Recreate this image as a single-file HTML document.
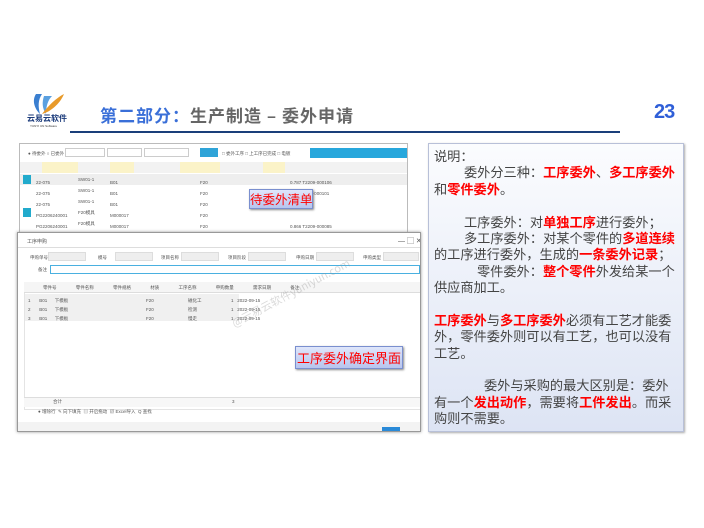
<!DOCTYPE html>
<html><head><meta charset="utf-8"><style>
*{margin:0;padding:0;box-sizing:border-box}
body{width:704px;height:528px;background:#fff;position:relative;overflow:hidden;font-family:"Liberation Sans","Noto Sans CJK SC",sans-serif}
.abs{position:absolute}
.t{font-size:4.5px;color:#555;white-space:nowrap}
.tag{position:absolute;background:linear-gradient(#dfe6fb,#b7c5ee);border:1px solid #7a8fcf;box-shadow:1px 1px 2px #888;color:#f00;font-family:"Noto Sans CJK SC",sans-serif;text-align:center;white-space:nowrap}
.note{position:absolute;left:428px;top:143px;width:256px;height:289px;border:1px solid #b8c0d8;background:linear-gradient(#fbfcfe,#dde4f4);box-shadow:1px 1px 2px #aaa;font-family:"Noto Sans CJK SC",sans-serif;font-size:13.2px;color:#444;padding:4px 0 0 5px;line-height:16.4px}
.note div{white-space:nowrap;height:16.4px}
.r{color:#f00;font-weight:bold}
</style></head><body>
<!-- logo -->
<svg class="abs" style="left:30px;top:92px" width="36" height="24" viewBox="0 0 36 24">
<path d="M6 2 C2 8 4 16 10 22 C8 14 8 8 12 2 Z" fill="#3a7fd0"/>
<path d="M14 4 C12 10 12 16 16 22 C16 14 18 8 22 4 Z" fill="#5aa0e0"/>
<path d="M12 22 C20 20 30 12 34 2 C26 6 18 14 12 22 Z" fill="#e89a2a"/>
</svg>
<div class="abs" style="left:27px;top:113px;font-size:8px;font-weight:bold;color:#1a3a7a;font-family:'Noto Sans CJK SC',sans-serif">云易云软件</div>
<div class="abs" style="left:30px;top:124px;font-size:3px;color:#333">YUNYI UN Software</div>
<div class="abs" style="left:100px;top:102px;font-size:17px;font-family:'Noto Sans CJK SC',sans-serif;font-weight:bold;color:#666;white-space:nowrap;letter-spacing:1px"><span style="color:#3a6fd8">第二部分：</span>生产制造 – 委外申请</div>
<div class="abs" style="left:654px;top:101px;font-size:20px;font-weight:bold;color:#2f5fd8;letter-spacing:-1px">23</div>
<div class="abs" style="left:70px;top:131px;width:550px;height:2px;background:#1a3f7a"></div>

<!-- screenshot 1 -->
<div class="abs" style="left:19px;top:143px;width:389px;height:92px;border:1px solid #bbb;background:#fff;overflow:hidden">
 <div class="abs t" style="left:8px;top:7px">● 待委外 ○ 已委外</div>
 <div class="abs" style="left:45px;top:4px;width:40px;height:9px;border:1px solid #ccc"></div>
 <div class="abs" style="left:87px;top:4px;width:35px;height:9px;border:1px solid #ccc"></div>
 <div class="abs" style="left:124px;top:4px;width:45px;height:9px;border:1px solid #ccc"></div>
 <div class="abs" style="left:180px;top:4px;width:18px;height:9px;background:#2fa4d8"></div>
 <div class="abs t" style="left:202px;top:7px">□ 委外工序 □ 上工序已完成 □ 电镀</div>
 <div class="abs" style="left:290px;top:4px;width:99px;height:10px;background:#27a7dc"></div>
 <div class="abs" style="left:0;top:18px;width:389px;height:11px;background:#f2f2f2"></div>
 <div class="abs" style="left:22px;top:18px;width:36px;height:11px;background:#fbf3c8"></div>
 <div class="abs" style="left:90px;top:18px;width:24px;height:11px;background:#fbf3c8"></div>
 <div class="abs" style="left:160px;top:18px;width:40px;height:11px;background:#fbf3c8"></div>
 <div class="abs" style="left:243px;top:18px;width:22px;height:11px;background:#fbf3c8"></div>
 <div class="abs" style="left:0;top:30px;width:389px;height:11px;background:#eee"></div>
 <div class="abs" style="left:3px;top:31px;width:8px;height:9px;background:#2ac"></div>
 <div class="abs" style="left:3px;top:64px;width:8px;height:9px;background:#2ac"></div>
 <div class="abs t" style="left:16px;top:33px;line-height:11px">22-075<br>22-075<br>22-075<br>PG2206240001<br>PG2206240001<br>PG2206240001</div>
 <div class="abs t" style="left:58px;top:30px;line-height:11px">SW01-1<br>SW01-1<br>SW01-1<br>F20模具<br>F20模具<br>F20模具</div>
 <div class="abs t" style="left:90px;top:33px;line-height:11px">B01<br>B01<br>B01<br>M000017<br>M000017<br>M000017</div>
 <div class="abs t" style="left:180px;top:33px;line-height:11px">F20<br>F20<br>F20<br>F20<br>F20<br>F20</div>
 <div class="abs t" style="left:270px;top:33px;line-height:11px">0.787 T2209-000106<br>4.83 T2209-000101<br><br><br>0.866 T2209-000085<br>0.866 T2209-000084</div>
</div>
<div class="tag" style="left:249px;top:189px;width:64px;height:20px;font-size:12.5px;line-height:18px">待委外清单</div>

<!-- dialog -->
<div class="abs" style="left:17px;top:232px;width:404px;height:200px;border:1px solid #999;background:#fff;box-shadow:0 0 3px #999;overflow:hidden">
 <div class="abs t" style="left:9px;top:5px;font-size:5px">工序申购</div>
 <div class="abs t" style="left:380px;top:3px;font-size:7px">— ▢ ✕</div>
 <div class="abs" style="left:0;top:14px;width:404px;height:1px;background:#ddd"></div>
 <div class="abs t" style="left:12px;top:22px">申购单号</div><div class="abs" style="left:30px;top:19px;width:38px;height:9px;background:#eee;border:1px solid #ddd"></div>
 <div class="abs t" style="left:80px;top:22px">模号</div><div class="abs" style="left:97px;top:19px;width:38px;height:9px;background:#eee;border:1px solid #ddd"></div>
 <div class="abs t" style="left:143px;top:22px">项目名称</div><div class="abs" style="left:163px;top:19px;width:38px;height:9px;background:#eee;border:1px solid #ddd"></div>
 <div class="abs t" style="left:210px;top:22px">项目阶段</div><div class="abs" style="left:230px;top:19px;width:38px;height:9px;background:#eee;border:1px solid #ddd"></div>
 <div class="abs t" style="left:278px;top:22px">申购日期</div><div class="abs" style="left:298px;top:19px;width:38px;height:9px;background:#eee;border:1px solid #ddd"></div>
 <div class="abs t" style="left:345px;top:22px">申购类型</div><div class="abs" style="left:365px;top:19px;width:36px;height:9px;background:#eee;border:1px solid #ddd"></div>
 <div class="abs t" style="left:20px;top:34px">备注</div><div class="abs" style="left:32px;top:32px;width:370px;height:9px;border:1px solid #4ab0e0"></div>
 <div class="abs" style="left:6px;top:49px;width:398px;height:128px;border:1px solid #e4e4e4"></div>
 <div class="abs" style="left:6px;top:49px;width:398px;height:11px;background:#f5f5f5;border-bottom:1px solid #ddd"></div>
 <div class="abs t" style="left:25px;top:52px;word-spacing:18px">零件号 零件名称 零件规格 材质 工序名称 申购数量 需求日期 备注</div>
 <div class="abs" style="left:7px;top:61px;width:314px;height:27px;background:#f0f0f0"></div>
 <div class="abs" style="left:221px;top:61px;width:100px;height:27px;background:#fff"></div>
 <div class="abs t" style="left:10px;top:63px;line-height:9px">1&nbsp;&nbsp;&nbsp;&nbsp;&nbsp;&nbsp;&nbsp;B01&nbsp;&nbsp;&nbsp;&nbsp;&nbsp;&nbsp;下模板<br>2&nbsp;&nbsp;&nbsp;&nbsp;&nbsp;&nbsp;&nbsp;B01&nbsp;&nbsp;&nbsp;&nbsp;&nbsp;&nbsp;下模板<br>3&nbsp;&nbsp;&nbsp;&nbsp;&nbsp;&nbsp;&nbsp;B01&nbsp;&nbsp;&nbsp;&nbsp;&nbsp;&nbsp;下模板</div>
 <div class="abs t" style="left:128px;top:63px;line-height:9px">F20<br>F20<br>F20</div>
 <div class="abs t" style="left:170px;top:63px;line-height:9px">磁化工<br>检测<br>慢走</div>
 <div class="abs t" style="left:213px;top:63px;line-height:9px">1&nbsp;&nbsp;&nbsp;2022-09-15<br>1&nbsp;&nbsp;&nbsp;2022-09-15<br>1&nbsp;&nbsp;&nbsp;2022-09-15</div>
 <div class="abs" style="left:6px;top:164px;width:398px;height:10px;background:#f7f7f7;border-top:1px solid #ddd"></div>
 <div class="abs t" style="left:35px;top:166px">合计</div><div class="abs t" style="left:214px;top:166px">3</div>
 <div class="abs t" style="left:20px;top:176px">● 增除行 &nbsp;✎ 向下填充 &nbsp;▤ 开启拖动 &nbsp;▧ Excel导入 &nbsp;Q 查找</div>
 <div class="abs" style="left:0;top:189px;width:404px;height:11px;background:#f3f3f3"></div>
 <div class="abs" style="left:364px;top:194px;width:18px;height:8px;background:#2a8ad8"></div>
</div>
<div class="tag" style="left:295px;top:346px;width:108px;height:23px;font-size:13px;line-height:21px">工序委外确定界面</div>
<div class="abs" style="left:225px;top:285px;font-size:11px;color:rgba(150,150,150,.35);transform:rotate(-28deg);white-space:nowrap;font-family:'Noto Sans CJK SC',sans-serif">@云易云软件yuniyun.com</div>

<!-- note -->
<div class="note">
<div>说明：</div>
<div style="padding-left:30px">委外分三种：<span class="r">工序委外</span>、<span class="r">多工序委外</span></div>
<div>和<span class="r">零件委外</span>。</div>
<div></div>
<div style="padding-left:30px">工序委外：对<span class="r">单独工序</span>进行委外；</div>
<div style="padding-left:30px">多工序委外：对某个零件的<span class="r">多道连续</span></div>
<div>的工序进行委外，生成的<span class="r">一条委外记录</span>；</div>
<div style="padding-left:43px">零件委外：<span class="r">整个零件</span>外发给某一个</div>
<div>供应商加工。</div>
<div></div>
<div><span class="r">工序委外</span>与<span class="r">多工序委外</span>必须有工艺才能委</div>
<div>外，零件委外则可以有工艺，也可以没有</div>
<div>工艺。</div>
<div></div>
<div style="padding-left:50px">委外与采购的最大区别是：委外</div>
<div>有一个<span class="r">发出动作</span>，需要将<span class="r">工件发出</span>。而采</div>
<div>购则不需要。</div>
</div>
</body></html>
